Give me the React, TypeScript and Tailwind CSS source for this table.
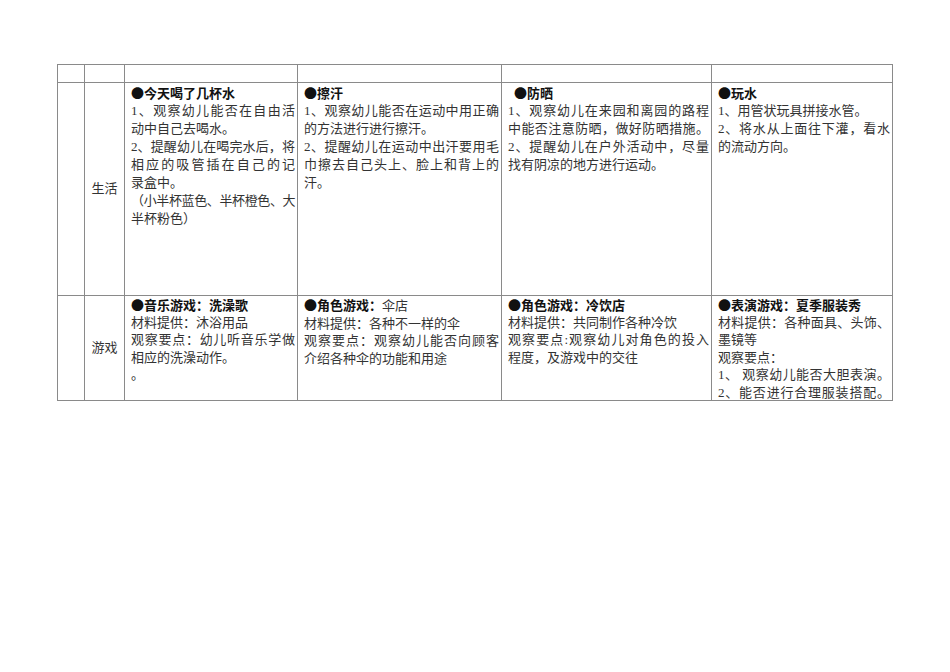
import type { ReactNode } from "react";

type Line = { text: ReactNode; bold?: boolean; justify?: boolean; indent?: boolean; tight?: boolean };

const b = (text: string): Line => ({ text, bold: true });
const j = (text: string): Line => ({ text, justify: true });
const t = (text: string): Line => ({ text });

const life: Line[][] = [
  [
    b("●今天喝了几杯水"),
    j("1、观察幼儿能否在自由活"),
    t("动中自己去喝水。"),
    j("2、提醒幼儿在喝完水后，将"),
    j("相应的吸管插在自己的记"),
    t("录盒中。"),
    { text: "（小半杯蓝色、半杯橙色、大", justify: true, tight: true },
    t("半杯粉色）"),
  ],
  [
    b("●擦汗"),
    j("1、观察幼儿能否在运动中用正确"),
    t("的方法进行进行擦汗。"),
    j("2、提醒幼儿在运动中出汗要用毛"),
    j("巾擦去自己头上、脸上和背上的"),
    t("汗。"),
  ],
  [
    { text: "●防晒", bold: true, indent: true },
    j("1、观察幼儿在来园和离园的路程"),
    j("中能否注意防晒，做好防晒措施。"),
    j("2、提醒幼儿在户外活动中，尽量"),
    t("找有阴凉的地方进行运动。"),
  ],
  [
    b("●玩水"),
    t("1、用管状玩具拼接水管。"),
    j("2、将水从上面往下灌，看水"),
    t("的流动方向。"),
  ],
];

const games: Line[][] = [
  [
    b("●音乐游戏：洗澡歌"),
    t("材料提供：沐浴用品"),
    j("观察要点：幼儿听音乐学做"),
    t("相应的洗澡动作。"),
    t("。"),
  ],
  [
    {
      text: (
        <>
          <span className="font-bold font-['Noto_Sans_CJK_SC',sans-serif] text-[#111]">●角色游戏：</span>
          伞店
        </>
      ),
    },
    t("材料提供：各种不一样的伞"),
    j("观察要点：观察幼儿能否向顾客"),
    t("介绍各种伞的功能和用途"),
  ],
  [
    b("●角色游戏：冷饮店"),
    t("材料提供：共同制作各种冷饮"),
    j("观察要点:观察幼儿对角色的投入"),
    t("程度，及游戏中的交往"),
  ],
  [
    b("●表演游戏：夏季服装秀"),
    j("材料提供：各种面具、头饰、"),
    t("墨镜等"),
    t("观察要点："),
    j("1、 观察幼儿能否大胆表演。"),
    j("2、能否进行合理服装搭配。"),
  ],
];

const Cell = ({ lines, compact }: { lines: Line[]; compact?: boolean }) => (
  <div
    className={
      "border-r border-b border-[#8a8a8a] pl-[6px] pr-[2px] text-[13px] text-[#333] font-['Liberation_Serif','Noto_Sans_CJK_SC',serif] " +
      (compact ? "pt-0 leading-[17.5px]" : "pt-[1px] leading-[18px]")
    }
  >
    {lines.map((line, i) => (
      <div
        key={i}
        className={
          "whitespace-nowrap " +
          (line.bold ? "font-bold text-[#111] font-['Noto_Sans_CJK_SC',sans-serif] " : "") +
          (line.justify ? "text-justify [text-align-last:justify] " : "") +
          (line.tight ? "tracking-[-0.6px] " : "") +
          (line.indent ? "pl-[6px]" : "")
        }
      >
        {line.text}
      </div>
    ))}
  </div>
);

const Label = ({ text }: { text: string }) => (
  <div className="border-r border-b border-[#8a8a8a] flex items-center justify-center text-[13px] text-[#333] font-['Liberation_Serif','Noto_Sans_CJK_SC',serif]">
    {text}
  </div>
);

const Blank = () => <div className="border-r border-b border-[#8a8a8a]" />;

export default function App() {
  return (
    <div className="min-h-[672px] w-[950px] bg-white pt-[64px] pl-[57px]">
      <div className="grid w-[836px] grid-cols-[27px_40px_173px_204px_210px_181px] grid-rows-[18px_213px_105px] border-l border-t border-[#8a8a8a]">
        {Array.from({ length: 6 }).map((_, i) => (
          <Blank key={i} />
        ))}

        <Blank />
        <Label text="生活" />
        {life.map((lines, i) => (
          <Cell key={i} lines={lines} />
        ))}

        <Blank />
        <Label text="游戏" />
        {games.map((lines, i) => (
          <Cell key={i} lines={lines} compact />
        ))}
      </div>
    </div>
  );
}
